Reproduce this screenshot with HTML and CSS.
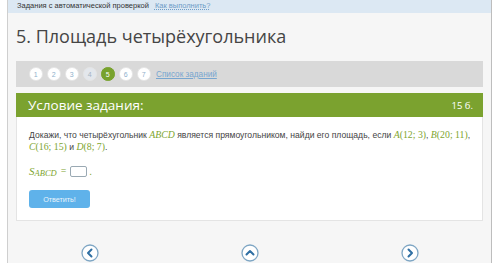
FILE: index.html
```html
<!DOCTYPE html>
<html lang="ru">
<head>
<meta charset="utf-8">
<link rel="stylesheet" href="styles.css">
</head>
<body>
<div class="page">
  <div class="topbar">
    <span class="topbar-text">Задания с автоматической проверкой</span>
    <a class="topbar-link">Как выполнить?</a>
  </div>
  <h1 class="title">5. Площадь четырёхугольника</h1>
  <div class="pager">
    <span class="num">1</span>
    <span class="num">2</span>
    <span class="num">3</span>
    <span class="num visited">4</span>
    <span class="num current">5</span>
    <span class="num">6</span>
    <span class="num">7</span>
    <a class="list-link">Список заданий</a>
  </div>
  <div class="task-head">
    <span class="task-title">Условие задания:</span>
    <span class="task-points">15 б.</span>
  </div>
  <div class="task-body">
    <p class="task-text">Докажи, что четырёхугольник <span class="m">ABCD</span> является прямоугольником, найди его площадь, если <span class="pt"><span class="m">A</span><span class="mn">(12; 3)</span>,</span> <span class="pt"><span class="m">B</span><span class="mn">(20; 11)</span>,</span> <span class="pt"><span class="m">C</span><span class="mn">(16; 15)</span></span> и <span class="pt"><span class="m">D</span><span class="mn">(8; 7)</span>.</span></p>
    <div class="answer">
      <span class="m s">S</span><span class="m sub">ABCD</span><span class="mn eq">=</span><span class="box"></span><span class="dot">.</span>
    </div>
    <button class="btn">Ответить!</button>
  </div>
  <div class="nav">
    <svg class="nav-ico" viewBox="0 0 18 18"><circle cx="9" cy="9" r="8" fill="#fff" stroke="#7ea6c4" stroke-width="1.3"/><path d="M10.5 5.5 L7 9 L10.5 12.5" fill="none" stroke="#2f6fa3" stroke-width="2" stroke-linecap="round" stroke-linejoin="round"/></svg>
    <svg class="nav-ico" viewBox="0 0 18 18"><circle cx="9" cy="9" r="8" fill="#fff" stroke="#7ea6c4" stroke-width="1.3"/><path d="M5.5 10.5 L9 7 L12.5 10.5" fill="none" stroke="#2f6fa3" stroke-width="2" stroke-linecap="round" stroke-linejoin="round"/></svg>
    <svg class="nav-ico" viewBox="0 0 18 18"><circle cx="9" cy="9" r="8" fill="#fff" stroke="#7ea6c4" stroke-width="1.3"/><path d="M7.5 5.5 L11 9 L7.5 12.5" fill="none" stroke="#2f6fa3" stroke-width="2" stroke-linecap="round" stroke-linejoin="round"/></svg>
  </div>
</div>
</body>
</html>
```
FILE: styles.css
```css
* { box-sizing: border-box; }
html, body { margin: 0; padding: 0; background: #fff; }
body { font-family: "Liberation Sans", Arial, sans-serif; overflow: hidden; height: 263px; }
.page {
  margin: 0 8px 0 7px;
  border-left: 1px solid #cfcfcf;
  border-right: 1px solid #bdbdbd;
  background: #f6f6f6;
  padding: 0 8px;
  height: 263px;
}
.topbar {
  margin: 0 -8px;
  height: 13px;
  background: #dce8f3;
  padding-left: 9px;
  font-size: 7.5px;
  line-height: 11px;
  color: #333;
  display: flex;
  gap: 6px;
}
.topbar-link { color: #6f9dc8; text-decoration: underline dotted; }
.title {
  margin: 0;
  height: 48px;
  font-family: "Open Sans", sans-serif;
  font-weight: 400;
  font-size: 18px;
  line-height: 47px;
  color: #454545;
}
.pager {
  height: 26px;
  background: #d9d9d9;
  display: flex;
  align-items: center;
  padding-left: 13px;
  gap: 4.5px;
}
.num {
  width: 13.5px; height: 13.5px;
  border-radius: 50%;
  background: #fff;
  border: 1px solid #e4e4e4;
  color: #8fb0cc;
  font-size: 7px;
  display: flex; align-items: center; justify-content: center;
}
.num.visited { background: #e3e7ec; color: #a4b4c4; }
.num.current { background: #78a22d; border-color: #78a22d; color: #fff; }
.list-link { color: #78a6d0; font-size: 8.2px; text-decoration: underline; margin-left: 1px; }
.task-head {
  margin-top: 6px;
  height: 24px;
  background: #7ba22f;
  color: #fff;
  display: flex; align-items: center; justify-content: space-between;
  padding: 0 10px 0 12px;
  font-family: "Open Sans", sans-serif;
}
.task-title { font-size: 13.5px; }
.task-points { font-size: 9.5px; }
.task-body {
  height: 104px;
  background: #fff;
  border: 1px solid #e4e4e4;
  border-top: none;
  padding: 12px 11px 0 12px;
}
.task-text {
  margin: 0;
  font-size: 8.6px;
  line-height: 12px;
  color: #444;
}
.pt { white-space: nowrap; }
.m { font-family: "Liberation Serif", serif; font-style: italic; color: #7ea52f; font-size: 9.8px; line-height: 1; }
.mn { font-family: "Liberation Serif", serif; color: #7ea52f; font-size: 9.8px; line-height: 1; }
.answer { margin-top: 11px; display: flex; align-items: center; height: 14px; }
.s { font-size: 11px; }
.sub { font-size: 8.5px; margin-top: 5px; }
.eq { margin: 0 4px; }
.box { width: 17px; height: 11px; border: 1px solid #9aa9b3; border-radius: 2px; background: #fff; }
.dot { color: #7ea52f; font-size: 10px; margin-left: 2px; }
.btn {
  margin-top: 12px;
  width: 61px; height: 18px;
  background: #5fb2ea;
  border: none;
  border-radius: 3px;
  color: #e8f4fc;
  font-family: "Liberation Sans", Arial, sans-serif;
  font-size: 7.2px;
}
.nav {
  display: flex;
  justify-content: space-between;
  padding: 23px 64px 0 65px;
}
.nav-ico { width: 18px; height: 18px; display: block; }
```
